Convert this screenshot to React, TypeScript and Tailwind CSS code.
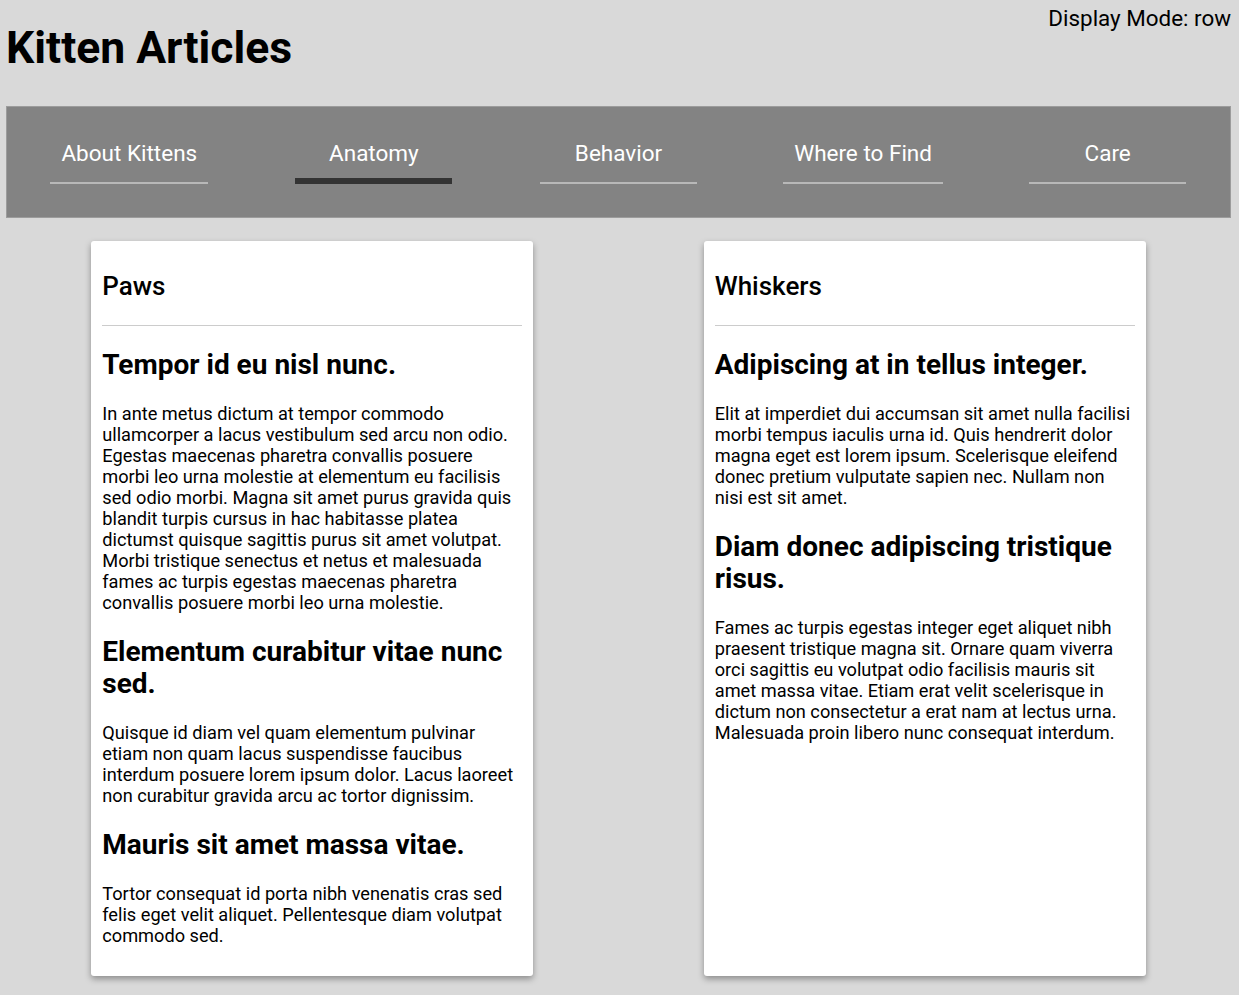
const tabs = ["About Kittens", "Anatomy", "Behavior", "Where to Find", "Care"];

const articles = [
  {
    title: "Paws",
    sections: [
      {
        heading: "Tempor id eu nisl nunc.",
        body: "In ante metus dictum at tempor commodo ullamcorper a lacus vestibulum sed arcu non odio. Egestas maecenas pharetra convallis posuere morbi leo urna molestie at elementum eu facilisis sed odio morbi. Magna sit amet purus gravida quis blandit turpis cursus in hac habitasse platea dictumst quisque sagittis purus sit amet volutpat. Morbi tristique senectus et netus et malesuada fames ac turpis egestas maecenas pharetra convallis posuere morbi leo urna molestie.",
      },
      {
        heading: "Elementum curabitur vitae nunc sed.",
        body: "Quisque id diam vel quam elementum pulvinar etiam non quam lacus suspendisse faucibus interdum posuere lorem ipsum dolor. Lacus laoreet non curabitur gravida arcu ac tortor dignissim.",
      },
      {
        heading: "Mauris sit amet massa vitae.",
        body: "Tortor consequat id porta nibh venenatis cras sed felis eget velit aliquet. Pellentesque diam volutpat commodo sed.",
      },
    ],
  },
  {
    title: "Whiskers",
    sections: [
      {
        heading: "Adipiscing at in tellus integer.",
        body: "Elit at imperdiet dui accumsan sit amet nulla facilisi morbi tempus iaculis urna id. Quis hendrerit dolor magna eget est lorem ipsum. Scelerisque eleifend donec pretium vulputate sapien nec. Nullam non nisi est sit amet.",
      },
      {
        heading: "Diam donec adipiscing tristique risus.",
        body: "Fames ac turpis egestas integer eget aliquet nibh praesent tristique magna sit. Ornare quam viverra orci sagittis eu volutpat odio facilisis mauris sit amet massa vitae. Etiam erat velit scelerisque in dictum non consectetur a erat nam at lectus urna. Malesuada proin libero nunc consequat interdum.",
      },
    ],
  },
];

export default function App() {
  const active = 1;

  return (
    <div className="min-h-[995px] bg-[#d9d9d9] pl-[6px] pr-[8px] pb-[18px] font-['Roboto',sans-serif] text-black">
      <header className="flex items-start justify-between">
        <h1 className="mt-[22px] text-[44.5px] font-bold leading-[53px]">Kitten Articles</h1>
        <span className="mt-[5px] text-[22.4px] leading-[26px]">Display Mode: row</span>
      </header>

      <nav className="mt-[31px] flex h-[112px] items-center border border-[#9c9c9c] bg-[#838383]">
        {tabs.map((tab, i) => (
          <div key={tab} className="flex flex-1 justify-center">
            <div
              className={
                "box-border h-[44px] min-w-[157px] px-[11px] text-center text-[22.5px] leading-[26px] text-white " +
                (i === active ? "border-b-[6px] border-[#333333]" : "border-b-2 border-[#b8b8b8]")
              }
            >
              {tab}
            </div>
          </div>
        ))}
      </nav>

      <main className="mt-[23px] flex justify-around">
        {articles.map((a) => (
          <article
            key={a.title}
            className="w-[442px] rounded-[3px] bg-white px-[11px] pb-[30px] pt-[30px] shadow-[0_3px_6px_rgba(0,0,0,0.35)]"
          >
            <h3 className="text-[26px] font-medium leading-[30px]">{a.title}</h3>
            <hr className="mt-[24px] border-t border-[#cccccc]" />
            {a.sections.map((s) => (
              <section key={s.heading}>
                <h2 className="mt-[23px] text-[28px] font-bold leading-[32px]">{s.heading}</h2>
                <p className="mt-[22px] text-[18.2px] leading-[21px]">{s.body}</p>
              </section>
            ))}
          </article>
        ))}
      </main>
    </div>
  );
}
